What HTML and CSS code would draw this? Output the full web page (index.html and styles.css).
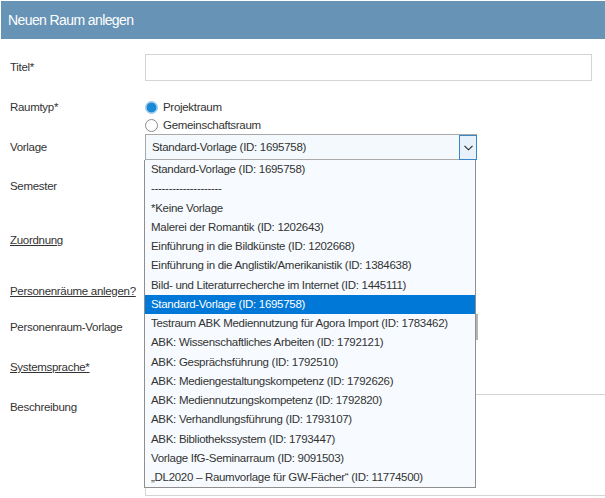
FILE: index.html
```html
<!DOCTYPE html>
<html lang="de">
<head>
<meta charset="utf-8">
<title>Neuen Raum anlegen</title>
<link rel="stylesheet" href="styles.css">
</head>
<body>
<div class="page">
  <div class="header">Neuen Raum anlegen</div>
  <div class="form">
    <div class="row row-titel">
      <div class="label">Titel*</div>
      <div class="field"><div class="input"></div></div>
    </div>
    <div class="row row-raumtyp">
      <div class="label">Raumtyp*</div>
      <div class="field radios">
        <div class="radio-line"><span class="radio checked"></span>Projektraum</div>
        <div class="radio-line"><span class="radio"></span>Gemeinschaftsraum</div>
      </div>
    </div>
    <div class="row row-vorlage">
      <div class="label">Vorlage</div>
      <div class="field">
        <div class="select open">
          <span class="select-text">Standard-Vorlage (ID: 1695758)</span>
          <span class="select-btn">
            <svg width="9" height="6" viewBox="0 0 9 6"><path d="M0.5 0.8 L4.5 4.8 L8.5 0.8" fill="none" stroke="#222" stroke-width="1.1"/></svg>
          </span>
          <ul class="dropdown">
            <li>Standard-Vorlage (ID: 1695758)</li>
            <li>--------------------</li>
            <li>*Keine Vorlage</li>
            <li>Malerei der Romantik (ID: 1202643)</li>
            <li>Einführung in die Bildkünste (ID: 1202668)</li>
            <li>Einführung in die Anglistik/Amerikanistik (ID: 1384638)</li>
            <li>Bild- und Literaturrecherche im Internet (ID: 1445111)</li>
            <li class="selected">Standard-Vorlage (ID: 1695758)</li>
            <li>Testraum ABK Mediennutzung für Agora Import (ID: 1783462)</li>
            <li>ABK: Wissenschaftliches Arbeiten (ID: 1792121)</li>
            <li>ABK: Gesprächsführung (ID: 1792510)</li>
            <li>ABK: Mediengestaltungskompetenz (ID: 1792626)</li>
            <li>ABK: Mediennutzungskompetenz (ID: 1792820)</li>
            <li>ABK: Verhandlungsführung (ID: 1793107)</li>
            <li>ABK: Bibliothekssystem (ID: 1793447)</li>
            <li>Vorlage IfG-Seminarraum (ID: 9091503)</li>
            <li>„DL2020 – Raumvorlage für GW-Fächer“ (ID: 11774500)</li>
          </ul>
        </div>
      </div>
    </div>
    <div class="row row-semester">
      <div class="label">Semester</div>
      <div class="field"></div>
    </div>
    <div class="row row-zuordnung">
      <div class="label"><span class="u">Zuordnung</span></div>
      <div class="field"></div>
    </div>
    <div class="row row-personen">
      <div class="label"><span class="u">Personenräume anlegen?</span></div>
      <div class="field"></div>
    </div>
    <div class="row row-pvorlage">
      <div class="label">Personenraum-Vorlage</div>
      <div class="field"><div class="select plain"></div></div>
    </div>
    <div class="row row-sprache">
      <div class="label"><span class="u">Systemsprache*</span></div>
      <div class="field"></div>
    </div>
    <div class="row row-beschreibung">
      <div class="label">Beschreibung</div>
      <div class="field"><div class="textarea"></div></div>
    </div>
  </div>
</div>
</body>
</html>
```

FILE: styles.css
```css
html, body {
  margin: 0;
  padding: 0;
  background: #ffffff;
  overflow: hidden;
}
body {
  font-family: "Liberation Sans", Arial, sans-serif;
  font-size: 11.5px;
  letter-spacing: -0.3px;
  color: #333333;
}
.page {
  width: 605px;
  height: 498px;
  padding: 1px 0 0 1px;
  box-sizing: border-box;
  overflow: hidden;
}
.header {
  height: 38px;
  background: #6693b6;
  color: #ffffff;
  font-size: 14px;
  letter-spacing: -0.6px;
  line-height: 38px;
  padding-left: 7px;
}
.form {
  padding-top: 7px;
}
.row {
  display: grid;
  grid-template-columns: 144px 1fr;
  align-items: center;
}
.label {
  padding-left: 9px;
  line-height: 18px;
  white-space: nowrap;
}
.u {
  text-decoration: underline;
}
.row-titel { height: 42px; }
.input {
  width: 445px;
  height: 25px;
  border: 1px solid #d4d4d4;
  background: #fff;
}
.row-raumtyp {
  height: 46px;
  align-items: start;
  padding-top: 10px;
  box-sizing: border-box;
}
.radio-line {
  display: flex;
  align-items: center;
  height: 18px;
  gap: 5px;
}
.radio {
  width: 11px;
  height: 11px;
  border: 1px solid #8a8a8a;
  border-radius: 50%;
  background: #fff;
  box-sizing: content-box;
}
.radio.checked {
  border-color: #9ac3e6;
  background: radial-gradient(circle, #1a8ad8 0, #1a8ad8 4.5px, #cfe3f3 5.5px);
}
.row-vorlage { height: 26px; }
.select {
  position: relative;
  width: 330px;
  height: 24px;
  border: 1px solid #a9a9a9;
  background: #f4f9fd;
  display: flex;
  align-items: center;
}
.select-text {
  padding-left: 6px;
  flex: 1;
}
.select-btn {
  position: absolute;
  right: -1px;
  top: 0;
  width: 16px;
  height: 23px;
  border: 1px solid #3a86c6;
  background: #e6f1fb;
  display: flex;
  align-items: center;
  justify-content: center;
}
.dropdown {
  position: absolute;
  left: -2px;
  top: 25px;
  width: 330px;
  margin: 0;
  padding: 0;
  list-style: none;
  background: #f7fbff;
  border: 1px solid #8f8f8f;
  border-top: none;
  z-index: 10;
}
.dropdown li {
  height: 19.25px;
  line-height: 19.25px;
  padding-left: 6px;
  white-space: nowrap;
}
.dropdown li.selected {
  background: #0078d7;
  color: #ffffff;
}
.row-semester { height: 52px; }
.row-zuordnung { height: 56px; }
.row-personen { height: 46px; }
.row-pvorlage { height: 26px; }
.select.plain {
  background: #fff;
  border-color: #b5b5b5;
  border-width: 1px 2px 1px 1px;
}
.row-sprache { height: 54px; }
.row-beschreibung {
  height: 104px;
  align-items: start;
}
.row-beschreibung .label {
  padding-top: 4px;
}
.textarea {
  width: 480px;
  height: 100px;
  border: 1px solid #d4d4d4;
  background: #fff;
}
```
